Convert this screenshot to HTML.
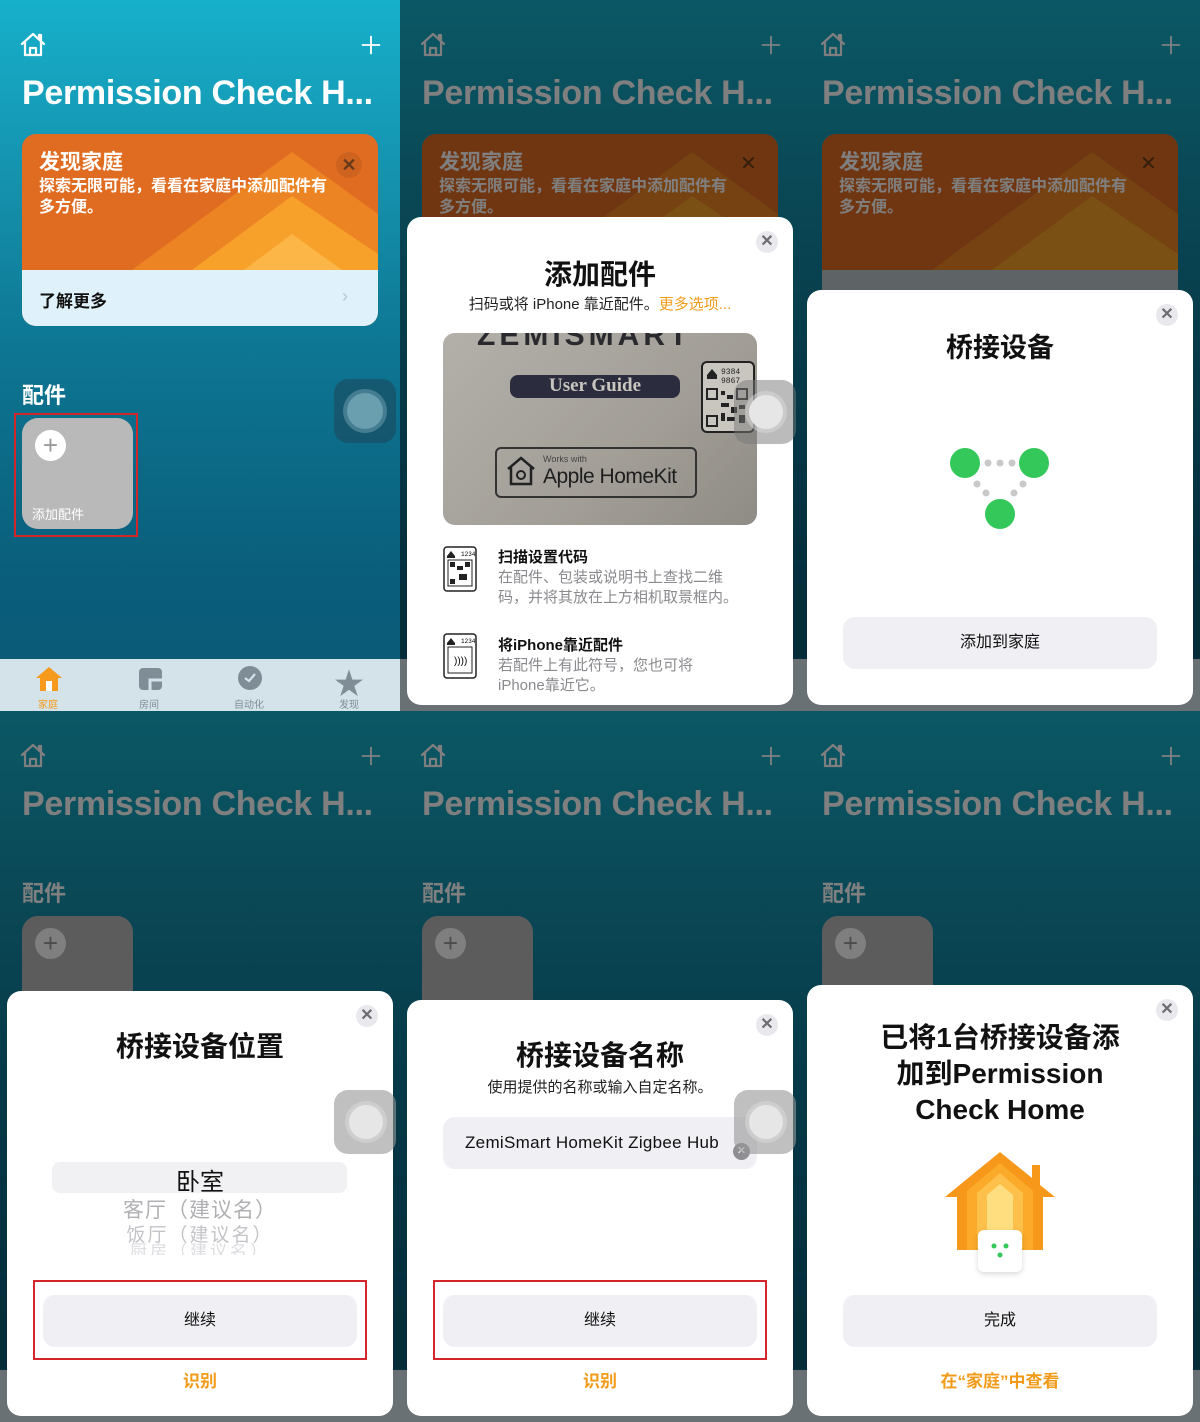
<!DOCTYPE html>
<html><head><meta charset="utf-8"><style>
*{margin:0;padding:0;box-sizing:border-box}
body{width:1200px;height:1422px;background:#073e4c;font-family:"Liberation Sans","Noto Sans CJK SC",sans-serif;position:relative;overflow:hidden}
.p{position:absolute;width:400px;height:711px;overflow:hidden;background:linear-gradient(180deg,#16b0cb 0%,#1592ae 25%,#0d7592 50%,#0a5f7c 80%,#0a5875 100%)}
.a{position:absolute}
.title{left:22px;top:74px;font-size:34px;font-weight:bold;color:#fff;white-space:nowrap;letter-spacing:-0.3px}
.sec{left:22px;font-size:22px;font-weight:bold;color:#fff}
.tile{left:22px;width:111px;height:111px;border-radius:16px;background:#b9b9b9}
.tab{left:0;top:659px;width:400px;height:52px;background:#d4e3ea}
.dim{left:0;top:0;width:400px;height:711px;background:rgba(0,0,0,.5)}
.sheet{left:7px;width:386px;height:488px;background:#fff;border-radius:14px}
.x{width:22px;height:22px;border-radius:50%;background:#e8e8ed;color:#6b6b70;font-size:16px;text-align:center;line-height:22px;font-weight:bold}
.btn{left:36px;width:314px;height:52px;border-radius:12px;background:#efeff4;font-size:16px;text-align:center;line-height:52px;color:#111}
.red{border:2px solid #d3262b}
.or{color:#f29b1a}
.at{width:62px;height:64px;border-radius:14px}
.ctr{left:0;width:386px;text-align:center}
.ct{left:17px;top:42px;width:300px;font-size:16px;font-weight:bold;color:#fff;line-height:21px}
</style></head><body>

<svg width="0" height="0" style="position:absolute">
<defs>
<symbol id="home" viewBox="0 0 28 28"><path d="M3 13 L14 3 L25 13 M6 11 V24 H22 V11 M11 24 V17 H17 V24 M20 7 V4 H22 V9" fill="none" stroke="currentColor" stroke-width="2.2" stroke-linejoin="round" stroke-linecap="round"/></symbol>
<symbol id="plus" viewBox="0 0 24 24"><path d="M12 2V22M2 12H22" stroke="currentColor" stroke-width="2"/></symbol>
</defs></svg>

<!-- PANEL 1 -->
<div class="p" style="left:0;top:0">
 <svg class="a" style="left:19px;top:31px;color:#fff" width="28" height="28"><use href="#home"/></svg>
 <svg class="a" style="left:360px;top:34px;color:#fff" width="22" height="22"><use href="#plus"/></svg>
 <div class="a title">Permission Check H...</div>
 <div class="a" style="left:22px;top:134px;width:356px;height:192px;border-radius:14px;overflow:hidden;background:#e06c22">
  <svg class="a" style="left:0;top:0" width="356" height="136"><polygon points="110,136 270,18 356,80 356,136" fill="#ec8423"/><polygon points="170,136 270,62 356,120 356,136" fill="#f7a12a"/><polygon points="222,136 270,100 320,136" fill="#fcb648"/></svg>
  <div class="a" style="left:17px;top:12px;font-size:21px;font-weight:bold;color:#fff">发现家庭</div>
  <div class="a ct">探索无限可能，看看在家庭中添加配件有多方便。</div>
  <div class="a x" style="left:314px;top:18px;background:rgba(0,0,0,.08);color:#6a3a1c;width:26px;height:26px;line-height:26px;font-size:18px">✕</div>
  <div class="a" style="left:0;top:136px;width:356px;height:56px;background:#dff1fa"></div>
  <div class="a" style="left:17px;top:153px;font-size:17px;font-weight:bold;color:#111">了解更多</div>
  <div class="a" style="left:320px;top:152px;font-size:18px;color:#b8c6cc">›</div>
 </div>
 <div class="a sec" style="top:378px">配件</div>
 <div class="a tile" style="top:418px"></div>
 <div class="a" style="left:35px;top:430px;width:31px;height:31px;border-radius:50%;background:#fff;color:#9a9a9a;font-size:26px;text-align:center;line-height:30px">+</div>
 <div class="a" style="left:32px;top:504px;font-size:13px;color:#fff">添加配件</div>
 <div class="a red" style="left:14px;top:413px;width:124px;height:124px"></div>
 <div class="a at" style="left:334px;top:379px;background:rgba(30,70,90,.55)"><div class="a" style="left:13px;top:14px;width:36px;height:36px;border-radius:50%;background:#6a9fb0;box-shadow:0 0 0 4px rgba(140,180,195,.4)"></div></div>
 <div class="a tab">
  <svg class="a" style="left:34px;top:5px" width="30" height="28"><path d="M2 14 L15 3 L28 14 H24 V27 H6 V14Z" fill="#f59a1c"/><rect x="12" y="17" width="6" height="10" fill="#fff"/></svg>
  <div class="a" style="left:38px;top:37px;font-size:10px;color:#f59a1c">家庭</div>
  <svg class="a" style="left:138px;top:8px" width="26" height="24"><rect x="1" y="1" width="23" height="22" rx="4" fill="#7f8e96"/><path d="M12 23 V13 H24" stroke="#d4e3ea" stroke-width="3" fill="none"/></svg>
  <div class="a" style="left:139px;top:37px;font-size:10px;color:#7f8e96">房间</div>
  <svg class="a" style="left:236px;top:6px" width="28" height="28"><circle cx="14" cy="13" r="12" fill="#7f8e96"/><path d="M9 13 L13 16 L19 9" stroke="#d4e3ea" stroke-width="2.2" fill="none"/></svg>
  <div class="a" style="left:234px;top:37px;font-size:10px;color:#7f8e96">自动化</div>
  <div class="a" style="left:334px;top:0px;font-size:30px;color:#7f8e96">★</div>
  <div class="a" style="left:339px;top:37px;font-size:10px;color:#7f8e96">发现</div>
 </div>
</div>

<!-- PANEL 2 -->
<div class="p" style="left:400px;top:0">
 <svg class="a" style="left:19px;top:31px;color:#fff" width="28" height="28"><use href="#home"/></svg>
 <svg class="a" style="left:360px;top:34px;color:#fff" width="22" height="22"><use href="#plus"/></svg>
 <div class="a title">Permission Check H...</div>
 <div class="a" style="left:22px;top:134px;width:356px;height:192px;border-radius:14px;overflow:hidden;background:#e06c22">
  <svg class="a" width="356" height="136"><polygon points="110,136 270,18 356,80 356,136" fill="#ec8423"/><polygon points="170,136 270,62 356,120 356,136" fill="#f7a12a"/></svg>
  <div class="a" style="left:17px;top:12px;font-size:21px;font-weight:bold;color:#fff">发现家庭</div>
  <div class="a ct">探索无限可能，看看在家庭中添加配件有多方便。</div>
  <div class="a" style="left:318px;top:17px;font-size:20px;color:#6a3a1c">✕</div>
 </div>
 <div class="a tab"></div>
 <div class="a dim"></div>
 <div class="a sheet" style="top:217px">
  <div class="a x" style="left:349px;top:14px">✕</div>
  <div class="a ctr" style="top:36px;font-size:28px;font-weight:bold;color:#111">添加配件</div>
  <div class="a ctr" style="top:76px;font-size:15px;color:#222">扫码或将 iPhone 靠近配件。<span class="or">更多选项...</span></div>
  <div class="a" style="left:36px;top:116px;width:314px;height:192px;border-radius:12px;background:linear-gradient(135deg,#b3b0aa,#a29e97 60%,#8f8b85);overflow:hidden">
   <div class="a" style="left:34px;top:-14px;font-size:30px;font-weight:bold;color:#2a2a2e;letter-spacing:4px">ZEMISMART</div>
   <div class="a" style="left:67px;top:42px;width:170px;height:23px;border-radius:8px;background:#2b2d3e;color:#c8c5bd;font-family:'Liberation Serif',serif;font-weight:bold;font-size:19px;text-align:center;line-height:22px">User Guide</div>
   <div class="a" style="left:52px;top:114px;width:202px;height:51px;border:2px solid #333;border-radius:6px"></div>
   <svg class="a" style="left:62px;top:122px" width="32" height="32"><path d="M3 14 L16 3 L29 14 M6 12 V29 H26 V12" fill="none" stroke="#222" stroke-width="2.5"/><circle cx="16" cy="20" r="4" fill="none" stroke="#222" stroke-width="2"/></svg>
   <div class="a" style="left:100px;top:121px;font-size:9px;color:#444">Works with</div>
   <div class="a" style="left:100px;top:132px;font-size:21px;color:#1e1e1e;letter-spacing:-0.5px">Apple HomeKit</div>
   <svg class="a" style="left:258px;top:28px" width="54" height="72"><rect x="1" y="1" width="52" height="70" rx="5" fill="#c9c6bf" stroke="#222" stroke-width="2"/><path d="M6 14 L11 8 L16 14 V18 H6Z" fill="#222"/><text x="20" y="13" font-size="8" font-family="Liberation Mono" fill="#222">9384</text><text x="20" y="22" font-size="8" font-family="Liberation Mono" fill="#222">9867</text><rect x="6" y="28" width="10" height="10" fill="none" stroke="#222" stroke-width="2"/><rect x="36" y="28" width="10" height="10" fill="none" stroke="#222" stroke-width="2"/><rect x="6" y="55" width="10" height="10" fill="none" stroke="#222" stroke-width="2"/><path d="M20 30h4v4h-4zM26 34h6v4h-6zM20 42h8v4h-8zM30 46h6v6h-6zM38 44h6v4h-6zM20 52h4v8h-4zM26 56h8v4h-8zM38 54h6v8h-6z" fill="#222"/></svg>
  </div>
  <svg class="a" style="left:36px;top:329px" width="34" height="46"><rect x="1" y="1" width="32" height="44" rx="3" fill="#fff" stroke="#222" stroke-width="1.5"/><rect x="5" y="14" width="24" height="26" fill="none" stroke="#222" stroke-width="1"/><path d="M7 16h5v5h-5zM22 16h5v5h-5zM7 33h5v5h-5zM14 20h6v4h-6zM16 28h8v6h-8z" fill="#222"/><text x="18" y="10" font-size="6" font-family="Liberation Mono">1234</text><path d="M4 10 L8 5 L12 10 V12 H4Z" fill="#222"/></svg>
  <div class="a" style="left:91px;top:329px;font-size:15px;font-weight:bold;color:#111">扫描设置代码</div>
  <div class="a" style="left:91px;top:351px;width:242px;font-size:15px;color:#8a8a8e;line-height:20px">在配件、包装或说明书上查找二维码，并将其放在上方相机取景框内。</div>
  <svg class="a" style="left:36px;top:416px" width="34" height="46"><rect x="1" y="1" width="32" height="44" rx="3" fill="#fff" stroke="#222" stroke-width="1.5"/><rect x="5" y="14" width="24" height="26" fill="none" stroke="#222" stroke-width="1"/><text x="11" y="31" font-size="10" font-family="Liberation Sans">))))</text><text x="18" y="10" font-size="6" font-family="Liberation Mono">1234</text><path d="M4 10 L8 5 L12 10 V12 H4Z" fill="#222"/></svg>
  <div class="a" style="left:91px;top:417px;font-size:15px;font-weight:bold;color:#111">将iPhone靠近配件</div>
  <div class="a" style="left:91px;top:439px;width:215px;font-size:15px;color:#8a8a8e;line-height:20px">若配件上有此符号，您也可将iPhone靠近它。</div>
 </div>
 <div class="a at" style="left:334px;top:380px;background:rgba(120,120,120,.5)"><div class="a" style="left:15px;top:15px;width:34px;height:34px;border-radius:50%;background:#e6e6e6;box-shadow:0 0 0 4px rgba(220,220,220,.5)"></div></div>
</div>

<!-- PANEL 3 -->
<div class="p" style="left:800px;top:0">
 <svg class="a" style="left:19px;top:31px;color:#fff" width="28" height="28"><use href="#home"/></svg>
 <svg class="a" style="left:360px;top:34px;color:#fff" width="22" height="22"><use href="#plus"/></svg>
 <div class="a title">Permission Check H...</div>
 <div class="a" style="left:22px;top:134px;width:356px;height:192px;border-radius:14px;overflow:hidden;background:#e06c22">
  <svg class="a" width="356" height="136"><polygon points="110,136 270,18 356,80 356,136" fill="#ec8423"/><polygon points="170,136 270,62 356,120 356,136" fill="#f7a12a"/></svg>
  <div class="a" style="left:17px;top:12px;font-size:21px;font-weight:bold;color:#fff">发现家庭</div>
  <div class="a ct">探索无限可能，看看在家庭中添加配件有多方便。</div>
  <div class="a" style="left:318px;top:17px;font-size:20px;color:#6a3a1c">✕</div>
  <div class="a" style="left:0;top:136px;width:356px;height:56px;background:#bcc7cc"></div>
 </div>
 <div class="a tab"></div>
 <div class="a dim"></div>
 <div class="a sheet" style="top:290px;height:415px">
  <div class="a x" style="left:349px;top:14px">✕</div>
  <div class="a ctr" style="top:36px;font-size:27px;font-weight:bold;color:#111">桥接设备</div>
  <svg class="a" style="left:0;top:140px" width="386" height="100">
   <g fill="#c9c9cc"><circle cx="181" cy="33" r="3.5"/><circle cx="193" cy="33" r="3.5"/><circle cx="205" cy="33" r="3.5"/><circle cx="170" cy="54" r="3.5"/><circle cx="179" cy="63" r="3.5"/><circle cx="216" cy="54" r="3.5"/><circle cx="207" cy="63" r="3.5"/></g>
   <g fill="#34c759"><circle cx="158" cy="33" r="15"/><circle cx="227" cy="33" r="15"/><circle cx="193" cy="84" r="15"/></g>
  </svg>
  <div class="a btn" style="top:327px">添加到家庭</div>
 </div>
</div>

<!-- PANEL 4 -->
<div class="p" style="left:0;top:711px">
 <svg class="a" style="left:19px;top:31px;color:#fff" width="28" height="28"><use href="#home"/></svg>
 <svg class="a" style="left:360px;top:34px;color:#fff" width="22" height="22"><use href="#plus"/></svg>
 <div class="a title">Permission Check H...</div>
 <div class="a sec" style="top:165px">配件</div>
 <div class="a tile" style="top:205px"></div>
 <div class="a" style="left:35px;top:217px;width:31px;height:31px;border-radius:50%;background:#fff;color:#9a9a9a;font-size:26px;text-align:center;line-height:30px">+</div>
 <div class="a tab"></div>
 <div class="a dim"></div>
 <div class="a sheet" style="top:280px;height:425px">
  <div class="a x" style="left:349px;top:14px">✕</div>
  <div class="a ctr" style="top:34px;font-size:28px;font-weight:bold;color:#111">桥接设备位置</div>
  <div class="a" style="left:45px;top:171px;width:295px;height:31px;border-radius:8px;background:#f1f1f3"></div>
  <div class="a ctr" style="top:171px;font-size:24px;color:#111">卧室</div>
  <div class="a ctr" style="top:203px;font-size:21px;color:#b0b0b4;letter-spacing:1px">客厅（建议名）</div>
  <div class="a ctr" style="top:229px;font-size:19px;color:#c4c4c8;letter-spacing:2px">饭厅（建议名）</div>
  <div class="a" style="left:0;top:252px;width:386px;height:12px;overflow:hidden"><div class="a ctr" style="top:-6px;font-size:17px;color:#dcdce0;letter-spacing:3px">厨房（建议名）</div></div>
  <div class="a btn" style="top:304px">继续</div>
  <div class="a ctr or" style="top:376px;font-size:17px;font-weight:bold">识别</div>
 </div>
 <div class="a red" style="left:33px;top:569px;width:334px;height:80px"></div>
 <div class="a at" style="left:334px;top:379px;background:rgba(150,150,150,.6)"><div class="a" style="left:15px;top:15px;width:34px;height:34px;border-radius:50%;background:#e6e6e6;box-shadow:0 0 0 4px rgba(220,220,220,.5)"></div></div>
</div>

<!-- PANEL 5 -->
<div class="p" style="left:400px;top:711px">
 <svg class="a" style="left:19px;top:31px;color:#fff" width="28" height="28"><use href="#home"/></svg>
 <svg class="a" style="left:360px;top:34px;color:#fff" width="22" height="22"><use href="#plus"/></svg>
 <div class="a title">Permission Check H...</div>
 <div class="a sec" style="top:165px">配件</div>
 <div class="a tile" style="top:205px"></div>
 <div class="a" style="left:35px;top:217px;width:31px;height:31px;border-radius:50%;background:#fff;color:#9a9a9a;font-size:26px;text-align:center;line-height:30px">+</div>
 <div class="a tab"></div>
 <div class="a dim"></div>
 <div class="a sheet" style="top:289px;height:416px">
  <div class="a x" style="left:349px;top:14px">✕</div>
  <div class="a ctr" style="top:34px;font-size:28px;font-weight:bold;color:#111">桥接设备名称</div>
  <div class="a ctr" style="top:76px;font-size:15px;color:#222">使用提供的名称或输入自定名称。</div>
  <div class="a" style="left:36px;top:117px;width:314px;height:52px;border-radius:12px;background:#efeff4"></div>
  <div class="a" style="left:58px;top:133px;font-size:17px;color:#111;letter-spacing:0.3px">ZemiSmart HomeKit Zigbee Hub</div>
  <div class="a" style="left:326px;top:143px;width:17px;height:17px;border-radius:50%;background:#8e8e93;color:#fff;font-size:11px;text-align:center;line-height:17px">✕</div>
  <div class="a btn" style="top:295px">继续</div>
  <div class="a ctr or" style="top:367px;font-size:17px;font-weight:bold">识别</div>
 </div>
 <div class="a red" style="left:33px;top:569px;width:334px;height:80px"></div>
 <div class="a at" style="left:334px;top:379px;background:rgba(150,150,150,.6)"><div class="a" style="left:15px;top:15px;width:34px;height:34px;border-radius:50%;background:#e6e6e6;box-shadow:0 0 0 4px rgba(220,220,220,.5)"></div></div>
</div>

<!-- PANEL 6 -->
<div class="p" style="left:800px;top:711px">
 <svg class="a" style="left:19px;top:31px;color:#fff" width="28" height="28"><use href="#home"/></svg>
 <svg class="a" style="left:360px;top:34px;color:#fff" width="22" height="22"><use href="#plus"/></svg>
 <div class="a title">Permission Check H...</div>
 <div class="a sec" style="top:165px">配件</div>
 <div class="a tile" style="top:205px"></div>
 <div class="a" style="left:35px;top:217px;width:31px;height:31px;border-radius:50%;background:#fff;color:#9a9a9a;font-size:26px;text-align:center;line-height:30px">+</div>
 <div class="a tab"></div>
 <div class="a dim"></div>
 <div class="a sheet" style="top:274px;height:431px">
  <div class="a x" style="left:349px;top:14px">✕</div>
  <div class="a ctr" style="top:35px;font-size:28px;font-weight:bold;color:#111;line-height:36px;padding:0 60px">已将1台桥接设备添加到Permission Check Home</div>
  <svg class="a" style="left:0;top:0" width="386" height="431">
   <path d="M193 167 L138 212 L150 212 V265 H236 V212 L248 212 L233 200 V180 H225 V193 Z" fill="#f7981b"/>
   <path d="M193 178 L160 206 V265 H226 V206 Z" fill="#fbaa2a"/>
   <path d="M193 188 L170 208 V263 H216 V208 Z" fill="#fdc04a"/>
   <path d="M193 199 L180 210 V248 H206 V210 Z" fill="#fede7e"/>
   <rect x="171" y="245" width="44" height="42" rx="6" fill="#fff" style="filter:drop-shadow(0 2px 3px rgba(0,0,0,.15))"/>
   <g fill="#34c759"><circle cx="187" cy="261" r="2.5"/><circle cx="199" cy="261" r="2.5"/><circle cx="193" cy="270" r="2.5"/></g>
  </svg>
  <div class="a btn" style="top:310px">完成</div>
  <div class="a ctr or" style="top:382px;font-size:17px;font-weight:bold">在“家庭”中查看</div>
 </div>
</div>

</body></html>
